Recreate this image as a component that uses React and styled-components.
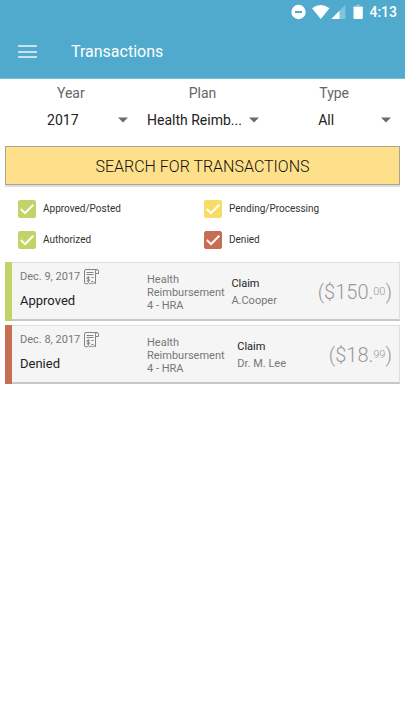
import React, { useState } from "react";
import styled, { createGlobalStyle } from "styled-components";

const GlobalStyle = createGlobalStyle`
  * {
    box-sizing: border-box;
  }

  body {
    margin: 0;
    background-color: #ffffff;
    color: #222222;
    font-family: Roboto, "Liberation Sans", sans-serif;
  }

  button, input, select {
    font-family: inherit;
  }
`;

const Header = styled.header`
  background-color: #4faace;
  border-bottom: 1px solid #7dbbd7;
  color: #ffffff;
`;

const StatusBar = styled.div`
  display: flex;
  align-items: center;
  justify-content: flex-end;
  height: 24px;
  padding-right: 8px;
`;

const StatusIcons = styled.svg`
  display: block;
  margin-right: 6px;
`;

const Clock = styled.span`
  font-size: 14px;
  font-weight: 500;
  line-height: 24px;
`;

const Toolbar = styled.div`
  display: flex;
  align-items: center;
  gap: 33px;
  height: 54px;
  padding: 2px 0 0 17px;
`;

const MenuButton = styled.button`
  display: flex;
  padding: 0;
  border: none;
  background: none;
  cursor: pointer;
`;

const Title = styled.h1`
  margin: 0;
  font-size: 16px;
  font-weight: 400;
  line-height: 24px;
`;

const Filters = styled.div`
  display: grid;
  grid-template-columns: repeat(3, 1fr);
  padding: 4px 5px 9px;
`;

const Filter = styled.div`
  display: flex;
  flex-direction: column;
`;

const FilterLabel = styled.label`
  color: #666666;
  font-size: 14px;
  line-height: 20px;
  text-align: center;
`;

const SelectWrapper = styled.div`
  position: relative;
  display: flex;
`;

const Select = styled.select`
  appearance: none;
  width: 100%;
  height: 34px;
  padding: 0 21px 0 5px;
  border: none;
  background: none;
  color: #222222;
  font-size: 14px;
  text-align: center;
  text-align-last: center;
`;

const Arrow = styled.svg`
  position: absolute;
  top: 14px;
  right: 9px;
  pointer-events: none;
`;

const SearchButton = styled.button`
  display: block;
  width: calc(100% - 10px);
  height: 39px;
  margin: 0 5px;
  padding: 2px 0 0;
  border: 1px solid #aaa593;
  background-color: #ffe08a;
  box-shadow: 0 2px 0 #dddddd;
  color: #111111;
  font-size: 16px;
  font-weight: 300;
  line-height: 35px;
  cursor: pointer;
`;

const StatusList = styled.div`
  display: grid;
  grid-template-columns: 186px 1fr;
  row-gap: 13px;
  padding: 15px 5px 13px 18px;
`;

const StatusOption = styled.label`
  display: flex;
  align-items: center;
  gap: 7px;
  height: 18px;
  color: #333333;
  font-size: 10px;
  line-height: 18px;
`;

const CheckboxWrapper = styled.span`
  display: grid;
  width: 18px;
  height: 18px;

  > * {
    grid-area: 1 / 1;
  }
`;

const Checkbox = styled.input`
  appearance: none;
  width: 18px;
  height: 18px;
  margin: 0;
  border: 1px solid ${({ $color }) => $color};
  border-radius: 2px;

  &:checked {
    background-color: ${({ $color }) => $color};
  }
`;

const CheckMark = styled.svg`
  pointer-events: none;
`;

const TransactionList = styled.ul`
  display: flex;
  flex-direction: column;
  gap: 4px;
  margin: 0;
  padding: 0 5px;
  list-style: none;
`;

const Card = styled.li`
  border-left: 7px solid ${({ $color }) => $color};
`;

const CardBody = styled.div`
  display: flex;
  align-items: center;
  height: 59px;
  padding: 2px 7px 0 0;
  border: 1px solid #dedede;
  border-bottom: 2px solid #c8c8c8;
  border-left: none;
  background-color: #f5f5f5;
`;

const Summary = styled.div`
  flex: 0 0 135px;
  padding: 0 0 2px 8px;
`;

const DateRow = styled.div`
  display: flex;
  align-items: center;
  gap: 4px;
  color: #777777;
  font-size: 11px;
  line-height: 20px;
`;

const Status = styled.div`
  font-size: 13px;
  line-height: 28px;
`;

const Plan = styled.div`
  flex: 3 0 76px;
  color: #777777;
  font-size: 11px;
  line-height: 13px;
`;

const PlanName = styled.div`
  max-width: 80px;
`;

const Details = styled.div`
  color: #777777;
  font-size: 11px;
  line-height: 17px;
  white-space: nowrap;
`;

const Kind = styled.div`
  color: #222222;
`;

const Amount = styled.div`
  flex: 1 0 auto;
  padding-left: 38px;
  color: #999999;
  font-size: 20px;
  font-weight: 300;
  line-height: 24px;
  text-align: right;
`;

const Cents = styled.span`
  font-size: 11px;
  line-height: 11px;
  vertical-align: 4px;
`;

const COLORS = {
  approved: "#c2d468",
  authorized: "#c2d468",
  pending: "#f7dc65",
  denied: "#c76e54",
};

const FILTERS = [
  { id: "year", label: "Year", value: "2017" },
  { id: "plan", label: "Plan", value: "Health Reimb..." },
  { id: "type", label: "Type", value: "All" },
];

const STATUSES = [
  { id: "approved", label: "Approved/Posted" },
  { id: "pending", label: "Pending/Processing" },
  { id: "authorized", label: "Authorized" },
  { id: "denied", label: "Denied" },
];

const TRANSACTIONS = [
  {
    date: "Dec. 9, 2017",
    type: "approved",
    status: "Approved",
    plan: "Health Reimbursement 4 - HRA",
    kind: "Claim",
    name: "A.Cooper",
    dollars: "150",
    cents: "00",
  },
  {
    date: "Dec. 8, 2017",
    type: "denied",
    status: "Denied",
    plan: "Health Reimbursement 4 - HRA",
    kind: "Claim",
    name: "Dr. M. Lee",
    dollars: "18",
    cents: "99",
  },
];

function PhoneStatus() {
  return (
    <StatusBar>
      <StatusIcons width="72" height="16" viewBox="0 0 72 16" fill="#ffffff">
        <circle cx="7.5" cy="8" r="7.2" />
        <rect x="4" y="7" width="7" height="2" fill="#4faace" />
        <path d="M21 4.2 Q29.5 -2 38.5 4.2 L29.8 15 Z" />
        <path d="M54.3 1 V15 H40.3 Z" opacity="0.3" />
        <path d="M48.5 6.8 V15 H40.3 Z" />
        <path d="M65 .8 H69 V2 H71.8 V4 H62.5 V2 H65 Z" opacity="0.4" />
        <path d="M62.5 3 H71.8 V14 Q71.8 15 70.8 15 H63.5 Q62.5 15 62.5 14 Z" />
      </StatusIcons>
      <Clock>4:13</Clock>
    </StatusBar>
  );
}

function ReceiptIcon() {
  return (
    <svg
      width="15"
      height="16"
      viewBox="0 0 15 16"
      fill="none"
      stroke="#777777"
      strokeWidth="0.9"
    >
      <path d="M11.5 4.5 V14.6 L10 13.6 L8.7 15 L7.2 13.8 L5.8 15 L4.3 13.8 L2.8 15 L.5 14.2 V2 Q.5 .5 2 .5 H12.8 Q14.5 .5 14.5 2.4 V4.5 H11.5 V2.2 Q11.5 .5 12.8 .5" />
      <path d="M2.5 3.5 H9.5 M2.5 5.5 H9.5" />
      <path d="M7.5 8.5 H9.5 M7.5 12.5 H9.5" />
      <path d="M5.6 8.6 Q2.8 7.7 2.8 9 Q2.8 9.9 4.3 10.2 Q5.9 10.6 5.7 11.5 Q5.2 12.5 2.6 11.8 M4.3 7.2 V13.2" />
    </svg>
  );
}

export default function App() {
  const [checked, setChecked] = useState({
    approved: true,
    pending: true,
    authorized: true,
    denied: true,
  });

  const toggle = (id) => setChecked({ ...checked, [id]: !checked[id] });

  return (
    <>
      <GlobalStyle />
      <Header>
        <PhoneStatus />
        <Toolbar>
          <MenuButton aria-label="Menu">
            <svg width="21" height="14" viewBox="0 0 21 14" fill="#c5e2ee">
              <rect x="1" y="0" width="19" height="2" />
              <rect x="1" y="6" width="19" height="2" />
              <rect x="1" y="11" width="19" height="2" />
            </svg>
          </MenuButton>
          <Title>Transactions</Title>
        </Toolbar>
      </Header>
      <main>
        <Filters>
          {FILTERS.map(({ id, label, value }) => (
            <Filter key={id}>
              <FilterLabel htmlFor={id}>{label}</FilterLabel>
              <SelectWrapper>
                <Select id={id}>
                  <option>{value}</option>
                </Select>
                <Arrow width="10" height="6" viewBox="0 0 10 6" fill="#6b6b6b">
                  <path d="M0 .5 H10 L5 5.5 Z" />
                </Arrow>
              </SelectWrapper>
            </Filter>
          ))}
        </Filters>
        <SearchButton>SEARCH FOR TRANSACTIONS</SearchButton>
        <StatusList>
          {STATUSES.map(({ id, label }) => (
            <StatusOption key={id}>
              <CheckboxWrapper>
                <Checkbox
                  type="checkbox"
                  $color={COLORS[id]}
                  checked={checked[id]}
                  onChange={() => toggle(id)}
                />
                <CheckMark
                  width="18"
                  height="18"
                  viewBox="0 0 18 18"
                  fill="none"
                  stroke="#ffffff"
                  strokeWidth="2"
                >
                  <path d="M2.8 9 L7 13.1 L15.3 4.8" />
                </CheckMark>
              </CheckboxWrapper>
              {label}
            </StatusOption>
          ))}
        </StatusList>
        <TransactionList>
          {TRANSACTIONS.map((item) => (
            <Card key={item.date} $color={COLORS[item.type]}>
              <CardBody>
                <Summary>
                  <DateRow>
                    {item.date}
                    <ReceiptIcon />
                  </DateRow>
                  <Status>{item.status}</Status>
                </Summary>
                <Plan>
                  <PlanName>{item.plan}</PlanName>
                </Plan>
                <Details>
                  <Kind>{item.kind}</Kind>
                  {item.name}
                </Details>
                <Amount>
                  (${item.dollars}.<Cents>{item.cents}</Cents>)
                </Amount>
              </CardBody>
            </Card>
          ))}
        </TransactionList>
      </main>
    </>
  );
}
